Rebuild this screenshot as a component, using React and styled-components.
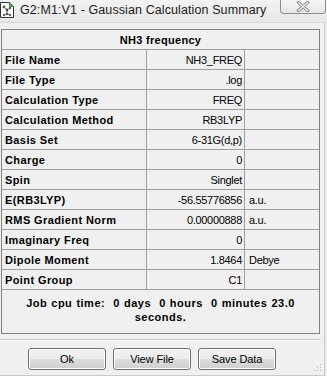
import React from "react";
import styled, { createGlobalStyle } from "styled-components";

const Global = createGlobalStyle`
  html, body { margin: 0; padding: 0; background: #ececec; }
  body { font-family: "Liberation Sans", Arial, sans-serif; }
`;

const Window = styled.div`
  width: 327px;
  height: 376px;
  box-sizing: border-box;
  background: linear-gradient(#f3f3f3, #e8e8e8 22px, #ececec 22px);
  display: flex;
  flex-direction: column;
  overflow: hidden;
`;

const TitleBar = styled.div`
  height: 22px;
  display: flex;
  align-items: flex-start;
  flex-shrink: 0;
`;

const AppIcon = styled.svg`
  width: 14px;
  height: 16px;
  margin: 2px 0 0 0;
  flex-shrink: 0;
`;

const Title = styled.div`
  font-family: "Liberation Sans", Arial, sans-serif;
  font-size: 12.5px;
  color: #1a1a1a;
  margin: 3px 0 0 6px;
  letter-spacing: 0.1px;
  white-space: nowrap;
`;

const CloseButton = styled.div`
  margin-left: auto;
  margin-right: 1px;
  margin-top: -1px;
  width: 46px;
  height: 15px;
  box-sizing: border-box;
  border: 1px solid #8e8e8e;
  border-top: none;
  border-radius: 0 0 4px 4px;
  background: linear-gradient(#f7f7f7, #e6e6e6);
  display: flex;
  align-items: center;
  justify-content: center;
`;

const Client = styled.div`
  flex: 1;
  margin-right: 2px;
  border-top: 1px solid #d9d9d9;
  border-right: 1px solid #c8c8c8;
  border-bottom: 1px solid #c8c8c8;
  background: #f0f0f0;
  padding: 6px 4px 0 1px;
  display: flex;
  flex-direction: column;
  position: relative;
`;

const Panel = styled.div`
  width: 319px;
  box-sizing: border-box;
  border: 1px solid #828282;
  display: flex;
  flex-direction: column;
`;

const Header = styled.div`
  height: 19px;
  border-bottom: 1px solid #a0a0a0;
  display: flex;
  align-items: center;
  justify-content: center;
  font-weight: bold;
  font-size: 11px;
  letter-spacing: 0.3px;
  color: #000;
`;

const Grid = styled.div`
  display: grid;
  grid-template-columns: 145px 98px 1fr;
`;

const Cell = styled.div`
  height: 19px;
  border-bottom: 1px solid #a0a0a0;
  border-right: ${(p) => (p.$last ? "none" : "1px solid #a0a0a0")};
  display: flex;
  align-items: center;
  justify-content: ${(p) => (p.$align === "right" ? "flex-end" : "flex-start")};
  padding: ${(p) =>
    p.$align === "right" ? "0 2px 0 0" : p.$bold ? "0 0 0 3px" : "0 0 0 4px"};
  font-size: 11px;
  font-weight: ${(p) => (p.$bold ? "bold" : "normal")};
  color: #000;
  white-space: nowrap;
  letter-spacing: ${(p) => (p.$bold ? "0.4px" : "-0.3px")};
`;

const Footer = styled.div`
  height: 43px;
  box-sizing: border-box;
  padding-top: 6px;
  text-align: center;
  font-weight: bold;
  font-size: 11px;
  line-height: 14px;
  color: #000;
  white-space: pre;
  letter-spacing: 0.5px;
  word-spacing: 0.5px;
`;

const Separator = styled.div`
  margin: 5px -4px 0 -1px;
  width: 321px;
  height: 1px;
  background: #c8c8c8;
  border-bottom: 1px solid #ffffff;
`;

const ButtonRow = styled.div`
  display: flex;
  gap: 7px;
  padding-left: 27px;
  margin-top: 7px;
`;

const Button = styled.button`
  width: 78px;
  height: 22px;
  box-sizing: border-box;
  border: 1px solid #707070;
  border-radius: 3px;
  background: linear-gradient(#f2f2f2 0%, #ebebeb 50%, #dddddd 50%, #cfcfcf 100%);
  box-shadow: inset 0 0 0 1px #fcfcfc;
  font-family: "Liberation Sans", Arial, sans-serif;
  font-size: 11px;
  color: #000;
  padding: 0;
  letter-spacing: -0.1px;
`;

const Grip = styled.svg`
  position: absolute;
  right: 2px;
  bottom: 3px;
  width: 8px;
  height: 8px;
`;

const rows = [
  ["File Name", "NH3_FREQ", ""],
  ["File Type", ".log", ""],
  ["Calculation Type", "FREQ", ""],
  ["Calculation Method", "RB3LYP", ""],
  ["Basis Set", "6-31G(d,p)", ""],
  ["Charge", "0", ""],
  ["Spin", "Singlet", ""],
  ["E(RB3LYP)", "-56.55776856", "a.u."],
  ["RMS Gradient Norm", "0.00000888", "a.u."],
  ["Imaginary Freq", "0", ""],
  ["Dipole Moment", "1.8464", "Debye"],
  ["Point Group", "C1", ""],
];

export default function App() {
  return (
    <>
      <Global />
      <Window>
        <TitleBar>
          <AppIcon viewBox="0 0 14 16">
            <path d="M0.5 0.5 H9.5 L13.5 4.5 V15.5 H0.5 Z" fill="#fff" stroke="#333" />
            <path d="M9.5 0.5 V4.5 H13.5 Z" fill="#39b54a" stroke="#2a7a30" strokeWidth="0.8" />
            <path d="M4 5 L7 8 L10 6 M7 8 L7 12 L4 13 M7 12 L10 13" stroke="#777" strokeWidth="1" fill="none" />
            <circle cx="4" cy="5" r="1.4" fill="#555" />
            <circle cx="10" cy="6" r="1.2" fill="#555" />
            <circle cx="7" cy="8" r="1.4" fill="#444" />
            <circle cx="7" cy="12" r="1.3" fill="#555" />
            <circle cx="4" cy="13" r="1.2" fill="#666" />
            <circle cx="10" cy="13" r="1.2" fill="#666" />
          </AppIcon>
          <Title>G2:M1:V1 - Gaussian Calculation Summary</Title>
          <CloseButton>
            <svg width="14" height="11" viewBox="0 0 14 11">
              <path d="M2.5 1.5 L11.5 9.5 M11.5 1.5 L2.5 9.5" stroke="#7a7a7a" strokeWidth="3" strokeLinecap="square" />
              <path d="M2.5 1.5 L11.5 9.5 M11.5 1.5 L2.5 9.5" stroke="#f4f4f4" strokeWidth="1.3" strokeLinecap="square" />
            </svg>
          </CloseButton>
        </TitleBar>
        <Client>
          <Panel>
            <Header>NH3 frequency</Header>
            <Grid>
              {rows.map(([label, value, unit]) => (
                <React.Fragment key={label}>
                  <Cell $bold>{label}</Cell>
                  <Cell $align="right">{value}</Cell>
                  <Cell $last>{unit}</Cell>
                </React.Fragment>
              ))}
            </Grid>
            <Footer>{"Job cpu time:  0 days  0 hours  0 minutes 23.0\nseconds."}</Footer>
          </Panel>
          <Separator />
          <ButtonRow>
            <Button>Ok</Button>
            <Button>View File</Button>
            <Button>Save Data</Button>
          </ButtonRow>
          <Grip viewBox="0 0 8 8">
            <rect x="6" y="0" width="1" height="1" fill="#b0b0b0" />
            <rect x="3" y="3" width="1" height="1" fill="#b0b0b0" />
            <rect x="6" y="3" width="1" height="1" fill="#b0b0b0" />
            <rect x="0" y="6" width="1" height="1" fill="#b0b0b0" />
            <rect x="3" y="6" width="1" height="1" fill="#b0b0b0" />
            <rect x="6" y="6" width="1" height="1" fill="#b0b0b0" />
          </Grip>
        </Client>
      </Window>
    </>
  );
}
